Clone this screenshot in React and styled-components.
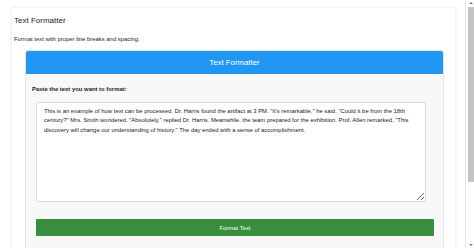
import React, { useState } from 'react'
import styled, { createGlobalStyle } from 'styled-components'

const GlobalStyle = createGlobalStyle`
  body {
    margin: 0;
    background: #fff;
    font-family: "Liberation Sans", Arial, sans-serif;
    color: #222;
  }
`

const Page = styled.div`
  padding: 8px 19px 0 12px;
`

const Container = styled.div`
  background: #fff;
  box-shadow: 0 0 3px rgba(0, 0, 0, 0.12);
  padding: 8px 2px 30px;
`

const Title = styled.h1`
  margin: 0;
  font-size: 8px;
  line-height: 10px;
  font-weight: 400;
  color: #1a1a1a;
`

const Description = styled.p`
  margin: 10px 0 7px;
  font-size: 5.9px;
  line-height: 7px;
  color: #1e1e1e;
`

const Card = styled.div`
  width: 419px;
  margin: 0 0 0 11px;
  background: #f8f8f8;
  border: 1px solid #e4e4e4;
  border-radius: 3px;
  box-sizing: border-box;
  overflow: hidden;
`

const CardHeader = styled.div`
  height: 24px;
  background: #2196f3;
  color: #fff;
  display: flex;
  align-items: center;
  justify-content: center;
  font-size: 7.8px;
  margin: -1px -1px 0;
  border-radius: 3px 3px 0 0;
`

const CardBody = styled.div`
  padding: 12px 9px 40px 6px;
`

const Label = styled.label`
  display: block;
  font-size: 5.9px;
  line-height: 7px;
  font-weight: 700;
  color: #1a1a1a;
  margin-bottom: 9px;
`

const Field = styled.div`
  padding-left: 4px;
  display: flex;
  flex-direction: column;
`

const TextArea = styled.textarea`
  width: 390px;
  height: 100px;
  box-sizing: border-box;
  border: 1px solid #dcdcdc;
  border-radius: 2px;
  background: #fff;
  padding: 4px 7px;
  font-family: "Liberation Sans", Arial, sans-serif;
  font-size: 5.9px;
  line-height: 9.3px;
  color: #222;
  resize: vertical;
  outline: none;
  margin: 0;
`

const Button = styled.button`
  margin-top: 17px;
  width: 398px;
  height: 17px;
  border: none;
  border-radius: 1px;
  background: #388e3c;
  color: #fff;
  font-family: "Liberation Sans", Arial, sans-serif;
  font-size: 5.9px;
  cursor: pointer;
  padding: 0;
`

/* drawn window scrollbar, sits over the right edge */
const ScrollTrack = styled.div`
  position: fixed;
  top: 0;
  right: 0;
  bottom: 0;
  width: 9px;
  background: #fff;
  border-left: 1px solid #e8e8e8;
  box-sizing: border-box;
`

const ScrollThumb = styled.div`
  position: absolute;
  top: 7px;
  right: 0;
  width: 6px;
  height: 175px;
  background: #c4c4c4;
`

const Arrow = styled.div`
  position: absolute;
  right: 1px;
  width: 0;
  height: 0;
  border-left: 2px solid transparent;
  border-right: 2px solid transparent;
  ${p => p.down
    ? 'bottom: 2px; border-top: 2px solid #7a7a7a;'
    : 'top: 2px; border-bottom: 2px solid #7a7a7a;'}
`

const sample = `This is an example of how text can be processed. Dr. Harris found the artifact at 3 PM. "It's remarkable," he said. "Could it be from the 18th century?" Mrs. Smith wondered. "Absolutely," replied Dr. Harris. Meanwhile, the team prepared for the exhibition. Prof. Allen remarked, "This discovery will change our understanding of history." The day ended with a sense of accomplishment.`

const App = () => {
  const [text, setText] = useState(sample)

  return (
    <>
      <GlobalStyle />
      <Page>
        <Container>
          <Title>Text Formatter</Title>
          <Description>Format text with proper line breaks and spacing.</Description>
          <Card>
            <CardHeader>Text Formatter</CardHeader>
            <CardBody>
              <Label htmlFor="input">Paste the text you want to format:</Label>
              <Field>
                <TextArea id="input" value={text} onChange={e => setText(e.target.value)} />
                <Button>Format Text</Button>
              </Field>
            </CardBody>
          </Card>
        </Container>
      </Page>
      <ScrollTrack>
        <Arrow />
        <ScrollThumb />
        <Arrow down />
      </ScrollTrack>
    </>
  )
}

export default App
